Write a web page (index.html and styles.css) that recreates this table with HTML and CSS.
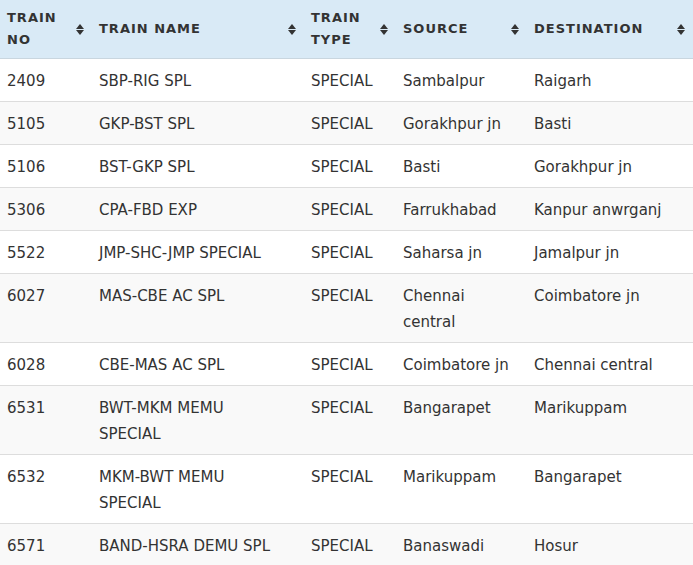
FILE: index.html
```html
<!DOCTYPE html>
<html>
<head>
<meta charset="utf-8">
<link rel="stylesheet" href="styles.css">
</head>
<body>
<table class="trains">
  <colgroup>
    <col class="c-no"><col class="c-name"><col class="c-type"><col class="c-src"><col class="c-dst">
  </colgroup>
  <thead>
    <tr>
      <th><div class="th-in"><span>TRAIN<br>NO</span><i class="sort"></i></div></th>
      <th><div class="th-in"><span>TRAIN NAME</span><i class="sort"></i></div></th>
      <th><div class="th-in"><span>TRAIN<br>TYPE</span><i class="sort"></i></div></th>
      <th><div class="th-in"><span>SOURCE</span><i class="sort"></i></div></th>
      <th><div class="th-in"><span>DESTINATION</span><i class="sort"></i></div></th>
    </tr>
  </thead>
  <tbody>
    <tr><td>2409</td><td>SBP-RIG SPL</td><td>SPECIAL</td><td>Sambalpur</td><td>Raigarh</td></tr>
    <tr><td>5105</td><td>GKP-BST SPL</td><td>SPECIAL</td><td>Gorakhpur jn</td><td>Basti</td></tr>
    <tr><td>5106</td><td>BST-GKP SPL</td><td>SPECIAL</td><td>Basti</td><td>Gorakhpur jn</td></tr>
    <tr><td>5306</td><td>CPA-FBD EXP</td><td>SPECIAL</td><td>Farrukhabad</td><td>Kanpur anwrganj</td></tr>
    <tr><td>5522</td><td>JMP-SHC-JMP SPECIAL</td><td>SPECIAL</td><td>Saharsa jn</td><td>Jamalpur jn</td></tr>
    <tr><td>6027</td><td>MAS-CBE AC SPL</td><td>SPECIAL</td><td>Chennai<br>central</td><td>Coimbatore jn</td></tr>
    <tr><td>6028</td><td>CBE-MAS AC SPL</td><td>SPECIAL</td><td>Coimbatore jn</td><td>Chennai central</td></tr>
    <tr><td>6531</td><td>BWT-MKM MEMU<br>SPECIAL</td><td>SPECIAL</td><td>Bangarapet</td><td>Marikuppam</td></tr>
    <tr><td>6532</td><td>MKM-BWT MEMU<br>SPECIAL</td><td>SPECIAL</td><td>Marikuppam</td><td>Bangarapet</td></tr>
    <tr><td>6571</td><td>BAND-HSRA DEMU SPL</td><td>SPECIAL</td><td>Banaswadi</td><td>Hosur</td></tr>
  </tbody>
</table>
</body>
</html>
```
FILE: styles.css
```css
html, body {
  margin: 0;
  padding: 0;
  background: #ffffff;
}
.trains {
  width: 693px;
  border-collapse: collapse;
  table-layout: fixed;
  font-family: "DejaVu Sans", Verdana, sans-serif;
  color: #333333;
}
.c-no { width: 92px; }
.c-name { width: 212px; }
.c-type { width: 92px; }
.c-src { width: 131px; }
.c-dst { width: 166px; }

.trains th {
  background: #d9eaf6;
  text-align: left;
  font-size: 13px;
  font-weight: bold;
  letter-spacing: 1px;
  line-height: 22px;
  padding: 7px 9px 7px 7px;
  height: 44px;
  border-bottom: 1px solid #c9d6df;
  vertical-align: middle;
  color: #333333;
}
.th-in {
  display: flex;
  align-items: center;
  justify-content: space-between;
}
.sort {
  display: flex;
  flex-direction: column;
  align-items: center;
  gap: 1px;
  width: 8px;
  flex: none;
  margin-right: -1px;
}
.sort::before, .sort::after {
  content: "";
  width: 0;
  height: 0;
  border-left: 4px solid transparent;
  border-right: 4px solid transparent;
}
.sort::before { border-bottom: 5px solid #333333; }
.sort::after { border-top: 5px solid #333333; }

.trains td {
  font-size: 15px;
  line-height: 26px;
  padding: 9px 7px 7px;
  vertical-align: top;
  border-bottom: 1px solid #dddddd;
}
.trains tbody tr:nth-child(even) td {
  background: #f9f9f9;
}
```
